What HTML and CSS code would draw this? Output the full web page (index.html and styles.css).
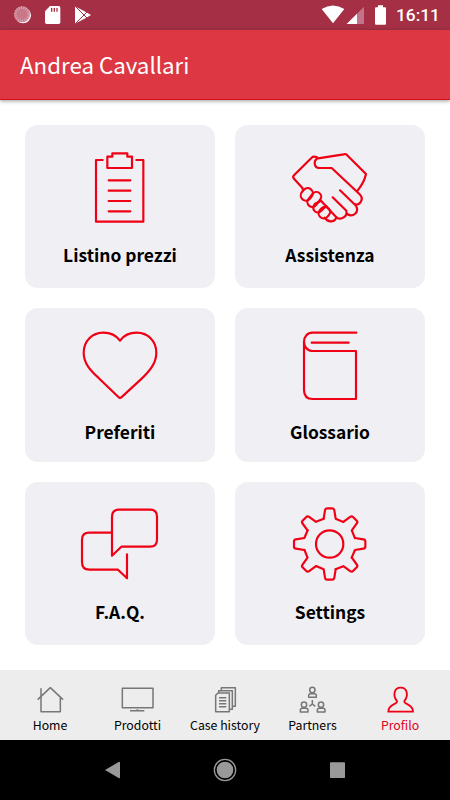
FILE: index.html
```
<!DOCTYPE html>
<html lang="it">
	<head>
		<meta charset="utf-8">
		<meta name="viewport" content="width=device-width, initial-scale=1">
		<title>Profilo</title>
		<link rel="stylesheet" href="styles.css">
	</head>
	<body>
		<div class="statusbar">
			<svg class="status-left" viewBox="0 0 300 90">
				<circle cx="69" cy="46" r="24" fill="#fff"/>
				<circle cx="66" cy="43" r="24" fill="#c9788a"/>
				<circle cx="66" cy="43" r="20" fill="none" stroke="#dba9b4" stroke-width="8" stroke-dasharray="3 4"/>
				<path fill="#fff" d="M150 18h26q5 0 5 5v44q0 5-5 5h-36q-5 0-5-5V34z"/>
				<path stroke="#a53046" stroke-width="4" d="M155 24v11M163 24v11M171 24v11"/>
				<path fill="#fff" d="M225 19l34 18 14 8-14 8-34 18z"/>
				<path fill="none" stroke="#a53046" stroke-width="3" d="M226 19l36 36M226 71l36-36"/>
			</svg>
			<svg class="status-right" viewBox="285 0 210 90">
				<path fill="#fff" d="M290 27Q324 6 358 27L324 70z"/>
				<path fill="#c3748a" d="M417 20v52h-52z"/>
				<path fill="#fff" d="M396 41v31h-31z"/>
				<path fill="#fff" d="M459 16h15v6h6q3 0 3 3v46q0 3-3 3h-27q-3 0-3-3V25q0-3 3-3h6z"/>
			</svg>
			<span class="clock">16:11</span>
		</div>
		<header class="header">
			<h1 class="title">Andrea Cavallari</h1>
		</header>
		<main class="grid">
			<a class="card">
				<svg class="icon" viewBox="165 75 270 255">
					<path d="M248 120H228V305H370V120H349"/>
					<path d="M262 110H277V100H322V110H336V144H262z"/>
					<path d="M266 181H331M266 212H331M266 243H331M266 274H331"/>
				</svg>
				<span class="label">Listino prezzi</span>
			</a>
			<a class="card">
				<svg class="icon" viewBox="0 0 270 255">
					<path d="M53 133V130L27 101Q22 96 27 91L80 38Q86 32 96 37"/>
					<path d="M216 139Q238 112 243 87L185 29Q181 26 176 28L99 40C84 46 87 69 102 69H140L224 148C238 162 225 181 211 178"/>
					<path d="M165 136L213 182C224 202 204 218 186 207"/>
					<path d="M143 157L184 197C188 214 171 225 156 219L108 167"/>
					<rect x="46" y="132" width="39" height="31" rx="15.500" transform="rotate(-50 66 148)"/>
					<rect x="64" y="149" width="49" height="29" rx="14.500" transform="rotate(-52 88 164)"/>
					<path d="M107 168L90 176C76 196 96 210 109 197L124 183"/>
					<rect x="100" y="188" width="36" height="30" rx="15" transform="rotate(-50 118 203)"/>
					<path d="M119 218C130 235 151 231 154 216"/>
				</svg>
				<span class="label">Assistenza</span>
			</a>
			<a class="card card-short">
				<svg class="icon" viewBox="165 75 270 255">
					<path d="M300 122C287 104 268 98 250 98C215 98 191 125 191 158C191 190 212 212 235 233L296 292Q300 296 304 292L365 236C388 214 409 190 409 158C409 125 385 98 350 98C332 98 313 104 300 122z"/>
				</svg>
				<span class="label">Preferiti</span>
			</a>
			<a class="card card-short">
				<svg class="icon" viewBox="165 75 270 255">
					<path d="M379 98H248C231 98 222 112 222 125S231 153 248 153H378V297H248Q222 297 222 270V125"/>
					<path d="M245 128H356"/>
				</svg>
				<span class="label">Glossario</span>
			</a>
			<a class="card">
				<svg class="icon" viewBox="165 81 270 255">
					<path d="M276 242V125Q276 104 298 104H390Q411 104 411 125V194Q411 215 390 215H304z"/>
					<path d="M276 173H208Q186 173 186 194V262Q186 284 208 284H294L321 310V238"/>
				</svg>
				<span class="label">F.A.Q.</span>
			</a>
			<a class="card">
				<svg class="icon" viewBox="-134 -126 270 255">
					<defs>
						<path id="tooth" d="M-18-76L-14-101Q-13-107-8-107H8Q13-107 14-101L18-76L41-66"/>
					</defs>
					<circle r="41"/>
					<use href="#tooth"/>
					<use href="#tooth" transform="rotate(45)"/>
					<use href="#tooth" transform="rotate(90)"/>
					<use href="#tooth" transform="rotate(135)"/>
					<use href="#tooth" transform="rotate(180)"/>
					<use href="#tooth" transform="rotate(225)"/>
					<use href="#tooth" transform="rotate(270)"/>
					<use href="#tooth" transform="rotate(315)"/>
				</svg>
				<span class="label">Settings</span>
			</a>
		</main>
		<nav class="tabs">
			<a class="tab">
				<svg class="tab-icon" viewBox="98 60 105 84">
					<path d="M112 104L150 68L188 104M122 70V140H180V98"/>
				</svg>
				<span>Home</span>
			</a>
			<a class="tab">
				<svg class="tab-icon" viewBox="360 60 105 84">
					<path d="M367 70H459V128H367zM390 137H433M412 133V137"/>
				</svg>
				<span>Prodotti</span>
			</a>
			<a class="tab">
				<svg class="tab-icon" viewBox="622 60 105 84">
					<path d="M645 91L652 84H686V140H645zM654 84V77H695V133H688M662 77V68H704V124H697"/>
					<path d="M655 98H677M655 107H677M655 116H677M655 125H677"/>
				</svg>
				<span>Case history</span>
			</a>
			<a class="tab">
				<svg class="tab-icon" viewBox="210 60 105 84">
					<g id="person">
						<circle cx="262" cy="75" r="8"/>
						<path d="M251 97V92Q251 86 257 86H268Q274 86 274 92V97z"/>
					</g>
					<use href="#person" x="-25" y="44"/>
					<use href="#person" x="26" y="44"/>
					<path d="M262 105V117L253 124M262 117L271 124"/>
				</svg>
				<span>Partners</span>
			</a>
			<a class="tab active">
				<svg class="tab-icon" viewBox="472 60 105 84">
					<path d="M514 108C502 95 503 68 525 68S548 95 536 108C533 119 563 116 562 140H488C487 116 517 119 514 108z"/>
				</svg>
				<span>Profilo</span>
			</a>
		</nav>
		<div class="sysnav">
			<svg viewBox="0 0 1350 180">
				<path d="M315 90L356 66Q360 64 360 68V112Q360 116 356 114z"/>
				<circle cx="675" cy="90" r="25"/>
				<circle class="ring" cx="675" cy="90" r="32"/>
				<rect x="990" y="67" width="45" height="47" rx="2"/>
			</svg>
		</div>
	</body>
</html>
```
FILE: styles.css
```
*{
	box-sizing: border-box;
}

body{
	font-family: "Noto Sans CJK SC", "Noto Sans", sans-serif;
	color: #000;
	background: #fff;
	margin: 0;
	width: 450px;
	height: 800px;
	display: flex;
	flex-direction: column;
	overflow: hidden;
}

svg{
	display: block;
}

.statusbar{
	display: flex;
	height: 30px;
	background: #a53046;
}

.status-left{
	width: 100px;
	height: 30px;
}

.status-right{
	width: 70px;
	height: 30px;
	margin-left: auto;
}

.clock{
	width: 60px;
	padding-left: 6px;
	font: 500 17.3px/31px Roboto, sans-serif;
	color: #fff;
}

.header{
	display: flex;
	align-items: center;
	height: 70px;
	padding: 0 20px 2px;
	background: #dc3742;
	border-bottom: 1px solid #d50f16;
	box-shadow: 0 1px 4px rgba(0, 0, 0, 0.4);
}

.title{
	margin: 0;
	font-size: 22.3px;
	font-weight: 400;
	line-height: 34px;
	color: #fff;
}

.grid{
	flex: 1;
	display: grid;
	grid-template-columns: 190px 190px;
	grid-template-rows: 163px 154px 163px;
	gap: 20px;
	padding: 25px;
}

.card{
	display: flex;
	flex-direction: column;
	align-items: center;
	padding-top: 20px;
	border-radius: 13px;
	background: #efeff4;
}

.card-short{
	padding-top: 17px;
}

.icon{
	width: 90px;
	height: 85px;
	fill: none;
	stroke: #f00014;
	stroke-width: 6.5;
	stroke-linecap: round;
	stroke-linejoin: round;
}

.label{
	margin-top: 11px;
	font-size: 17.4px;
	font-weight: 700;
	line-height: 28px;
}

.card-short .label{
	margin-top: 8px;
}

.tabs{
	display: grid;
	grid-template-columns: repeat(5, 87.5px);
	justify-content: center;
	height: 70px;
	background: #ededed;
	font-size: 12.3px;
	line-height: 20px;
}

.tab{
	display: flex;
	flex-direction: column;
	align-items: center;
	padding-top: 15px;
	white-space: nowrap;
}

.tab-icon{
	width: 35px;
	height: 28px;
	margin-bottom: 2px;
	fill: none;
	stroke: #777;
	stroke-width: 4.5;
	stroke-linejoin: round;
}

.active{
	color: #e2001a;
}

.active .tab-icon{
	stroke: #f00014;
	stroke-width: 5.5;
}

.sysnav{
	height: 60px;
	background: #000;
}

.sysnav svg{
	width: 450px;
	height: 60px;
	fill: #999;
}

.sysnav .ring{
	fill: none;
	stroke: #999;
	stroke-width: 4;
}
```
